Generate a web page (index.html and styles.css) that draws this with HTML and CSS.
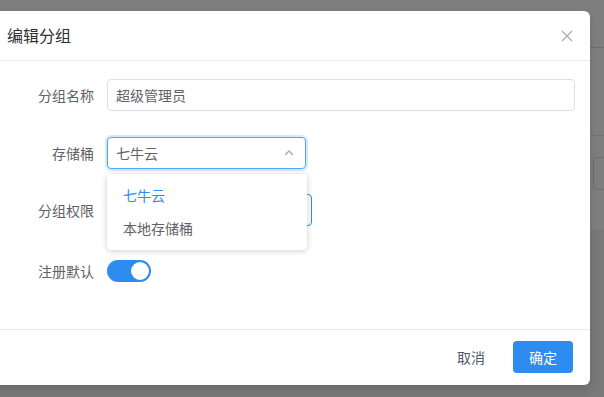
FILE: index.html
```html
<!DOCTYPE html>
<html lang="zh">
<head>
<meta charset="utf-8">
<title>编辑分组</title>
<link rel="stylesheet" href="styles.css">
</head>
<body>
<div class="page">
  <div class="page-top"></div>
  <div class="page-row page-row-a"></div>
  <div class="page-row page-row-b"><div class="page-input"></div></div>
  <div class="page-rest"></div>
</div>
<div class="mask"></div>
<div class="dialog">
  <div class="dialog-header">
    <span class="dialog-title">编辑分组</span>
    <svg class="close" width="12" height="12" viewBox="0 0 12 12"><path d="M1 1L11 11M11 1L1 11" stroke="#a8abb2" stroke-width="1.2" fill="none"/></svg>
  </div>
  <div class="dialog-body">
    <div class="form-row row-1">
      <label class="form-label">分组名称</label>
      <div class="input input-full">超级管理员</div>
    </div>
    <div class="form-row row-2">
      <label class="form-label">存储桶</label>
      <div class="input input-select is-focus">
        <span>七牛云</span>
        <svg class="arrow" width="10" height="6" viewBox="0 0 10 6"><path d="M1 5L5 1L9 5" stroke="#a8abb2" stroke-width="1.3" fill="none"/></svg>
      </div>
    </div>
    <div class="form-row row-3">
      <label class="form-label">分组权限</label>
      <div class="input input-perm"></div>
    </div>
    <div class="form-row row-4">
      <label class="form-label">注册默认</label>
      <div class="switch"><span class="knob"></span></div>
    </div>
  </div>
  <div class="dialog-footer">
    <button class="btn btn-text">取消</button>
    <button class="btn btn-primary">确定</button>
  </div>
  <ul class="dropdown">
    <li class="option selected">七牛云</li>
    <li class="option">本地存储桶</li>
  </ul>
</div>
</body>
</html>
```
FILE: styles.css
```css
* { box-sizing: border-box; }
html, body {
  margin: 0;
  padding: 0;
  width: 604px;
  height: 397px;
  overflow: hidden;
  font-family: "Noto Sans CJK SC", "Noto Sans", sans-serif;
}
.page {
  width: 604px;
  height: 397px;
  background: #ffffff;
  display: flex;
  flex-direction: column;
}
.page-top { height: 48px; border-bottom: 1px solid #dcdfe6; }
.page-row-a { height: 88px; border-bottom: 1px solid #e4e7ed; }
.page-row-b { height: 94px; padding-top: 21px; padding-left: 593px; }
.page-input {
  width: 20px;
  height: 33px;
  border: 1px solid #dcdfe6;
  border-radius: 4px;
}
.page-rest { flex: 1; background: #f2f3f5; }
.mask {
  position: absolute;
  inset: 0;
  background: rgba(0, 0, 0, 0.5);
}
.dialog {
  position: absolute;
  left: -10px;
  top: 11px;
  width: 600px;
  height: 374px;
  background: #fff;
  border-radius: 6px;
  box-shadow: 0 4px 12px rgba(0, 0, 0, 0.15);
  display: flex;
  flex-direction: column;
}
.dialog-header {
  height: 50px;
  border-bottom: 1px solid #e8eaec;
  display: flex;
  align-items: center;
  justify-content: space-between;
  padding: 0 17px 1px 17px;
}
.dialog-title {
  font-size: 16px;
  color: #303133;
  line-height: 20px;
}
.close { margin-top: 2px; }
.dialog-body {
  flex: 1;
  padding: 18px 15px 0 17px;
  display: flex;
  flex-direction: column;
}
.form-row {
  display: flex;
  align-items: center;
  height: 32px;
}
.row-1 { margin-bottom: 26px; }
.row-2 { margin-bottom: 25px; }
.row-3 { margin-bottom: 29px; }
.form-label {
  width: 87px;
  margin-right: 13px;
  text-align: right;
  font-size: 14px;
  color: #606266;
}
.input {
  height: 32px;
  border: 1px solid #dcdfe6;
  border-radius: 4px;
  padding: 0 8px;
  font-size: 14px;
  color: #606266;
  display: flex;
  align-items: center;
}
.input-full { flex: 1; }
.input-select {
  width: 199px;
  justify-content: space-between;
  padding-right: 11px;
}
.input-select.is-focus {
  border-color: #57a3f3;
  box-shadow: 0 0 0 2px rgba(45, 140, 240, 0.2);
}
.input-perm {
  width: 205px;
  border-color: #2d8cf0;
}
.switch {
  width: 44px;
  height: 22px;
  border-radius: 11px;
  background: #2d8cf0;
  display: flex;
  align-items: center;
  justify-content: flex-end;
  padding-right: 2px;
}
.knob {
  width: 18px;
  height: 18px;
  border-radius: 50%;
  background: #fff;
}
.dialog-footer {
  height: 56px;
  border-top: 1px solid #e8eaec;
  display: flex;
  justify-content: flex-end;
  align-items: center;
  gap: 12px;
  padding: 0 17px 1px 0;
}
.btn {
  width: 60px;
  height: 32px;
  border: none;
  border-radius: 4px;
  font-family: inherit;
  font-size: 14px;
  cursor: pointer;
}
.btn-text { background: transparent; color: #515a6e; }
.btn-primary { background: #2d8cf0; color: #fff; }
.dropdown {
  position: absolute;
  left: 117px;
  top: 163px;
  width: 200px;
  margin: 0;
  padding: 5px 0;
  list-style: none;
  background: #fff;
  border-radius: 4px;
  box-shadow: 0 1px 6px rgba(0, 0, 0, 0.2);
}
.option {
  height: 33px;
  line-height: 33px;
  padding-left: 16px;
  font-size: 14px;
  color: #606266;
}
.option.selected { color: #2d8cf0; }
```
